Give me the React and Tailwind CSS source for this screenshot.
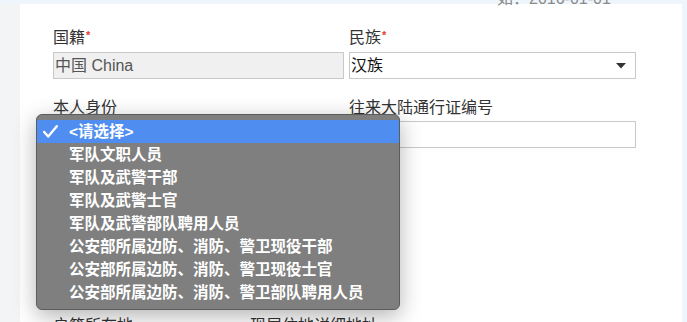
import React from "react";

const FONT = { fontFamily: '"Liberation Sans", "Noto Sans CJK SC", sans-serif' };

function Label({ children, required }) {
  return (
    <div className="h-[20px] leading-[20px] text-[16px] text-[#333] flex items-start">
      <span>{children}</span>
      {required && <span className="text-[11px] leading-[12px] font-bold text-[#e53935] ml-[1px] mt-[1px]">*</span>}
    </div>
  );
}

const items = [
  "军队文职人员",
  "军队及武警干部",
  "军队及武警士官",
  "军队及武警部队聘用人员",
  "公安部所属边防、消防、警卫现役干部",
  "公安部所属边防、消防、警卫现役士官",
  "公安部所属边防、消防、警卫部队聘用人员",
];

export default function App() {
  return (
    <div className="w-[687px] h-[322px] overflow-hidden bg-[#eef5fc] pt-[4px] flex" style={FONT}>
      <div className="w-[20px] shrink-0 bg-[#f3f4f6]" />
      <div className="w-[662px] shrink-0 bg-white relative pl-[33px]">
        <div className="h-0 flex">
          <span className="-mt-[17px] ml-[444px] text-[16px] leading-[24px] text-[#8a8a8a] whitespace-nowrap">
            如：2016-01-01
          </span>
        </div>

        <div className="pt-[24px] grid grid-cols-[291px_287px] gap-x-[5px]">
          <div>
            <Label required>国籍</Label>
            <div className="mt-[4px] h-[27px] bg-[#f0f0f0] border border-[#c9c9c9] px-[1px] text-[16px] leading-[25px] text-[#555]">
              中国 China
            </div>
          </div>
          <div>
            <Label required>民族</Label>
            <div className="mt-[4px] h-[27px] bg-white border border-[#c9c9c9] pl-[1px] pr-[9px] flex items-center justify-between text-[16px] text-[#111]">
              <span className="leading-[25px]">汉族</span>
              <svg width="10" height="6" viewBox="0 0 10 6">
                <path d="M0 0 L10 0 L5 5.5 Z" fill="#333" />
              </svg>
            </div>
          </div>

          <div className="mt-[19px]">
            <Label>本人身份</Label>
            <div className="mt-[3px] h-[27px] bg-white border border-[#c9c9c9]" />
          </div>
          <div className="mt-[19px]">
            <Label>往来大陆通行证编号</Label>
            <div className="mt-[3px] h-[27px] bg-white border border-[#c9c9c9]" />
          </div>
        </div>

        <div className="mt-[168px] flex text-[16px] leading-[20px] text-[#333] whitespace-nowrap">
          <span>户籍所在地</span>
          <span className="ml-[117px]">现居住地详细地址</span>
        </div>

        <div className="absolute left-[16px] top-[110px] w-[364px] h-[196px] rounded-[6px] bg-[#7f7f7f] border border-[#5c5c5c] pt-[5px] shadow-[0_6px_22px_rgba(0,0,0,0.3)] text-white text-[15.5px] font-semibold">
          <div className="h-[23px] bg-[#4f8ef0] flex items-center">
            <svg className="ml-[6px]" width="15" height="13" viewBox="0 0 15 13">
              <path d="M1.2 7 L5.2 11.5 L13.8 1.2" fill="none" stroke="white" strokeWidth="2.4" strokeLinecap="round" strokeLinejoin="round" />
            </svg>
            <span className="ml-[11px] leading-[23px]">&lt;请选择&gt;</span>
          </div>
          {items.map((t) => (
            <div key={t} className="h-[23px] leading-[23px] pl-[32px] whitespace-nowrap">
              {t}
            </div>
          ))}
        </div>
      </div>
    </div>
  );
}
